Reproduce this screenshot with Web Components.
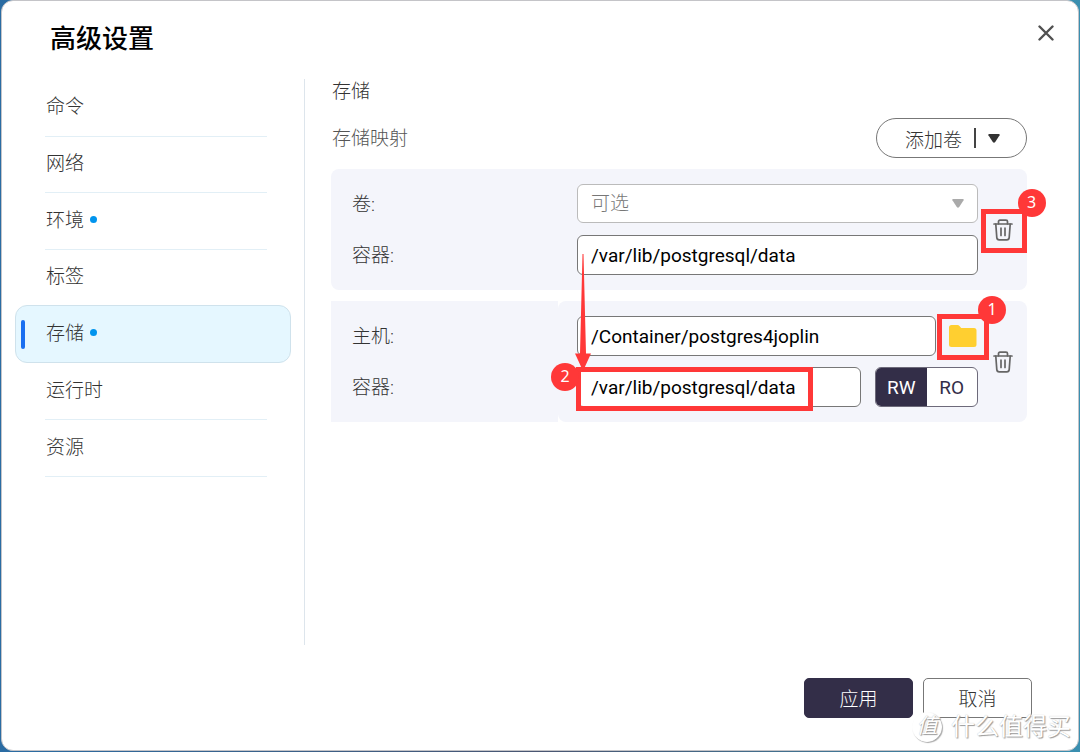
<!DOCTYPE html>
<html lang="zh-CN">
<head>
<meta charset="UTF-8">
<meta name="viewport" content="width=device-width, initial-scale=1.0">
<title>高级设置</title>
<style>
  body {
    margin: 0;
    min-height: 100vh;
    display: flex;
    background: linear-gradient(90deg, #2a6ca3 0%, #4a5672 50%, #3a8fb0 100%);
    font-family: Roboto, "Noto Sans CJK SC", sans-serif;
    font-size: 19px;
    font-weight: 300;
    color: #333;
  }
</style>
</head>
<body>
<settings-dialog>
  <settings-nav slot="nav">
    <nav-item>命令</nav-item>
    <nav-item>网络</nav-item>
    <nav-item changed>环境</nav-item>
    <nav-item>标签</nav-item>
    <nav-item changed active>存储</nav-item>
    <nav-item>运行时</nav-item>
    <nav-item>资源</nav-item>
  </settings-nav>
  <storage-settings>
    <volume-card></volume-card>
    <host-card></host-card>
  </storage-settings>
  <site-watermark slot="watermark"></site-watermark>
</settings-dialog>

<script>
const trashIcon = `
  <svg width="20" height="22" viewBox="0 0 20 22" fill="none" stroke="#666" stroke-width="1.7" stroke-linecap="round" stroke-linejoin="round">
    <path d="M1 5h18"/>
    <path d="M5.5 4.8V2.6Q5.5 1.2 7 1.2h6q1.500 0 1.500 1.400v2.200"/>
    <path d="M2.800 5.200l1 13.400q.2 2.200 2.400 2.200h7.600q2.200 0 2.400-2.200l1-13.400"/>
    <path d="M8 9.200v7.200M12 9.200v7.200"/>
  </svg>`;

// shared by both storage cards
const cardStyles = `
  :host { display: flex; position: relative; }
  * { box-sizing: border-box; }
  .labels, .controls {
    display: grid;
    grid-auto-rows: 40px;
    gap: 11px;
    padding: 15px 0;
    background: #f4f5fb;
  }
  .labels { flex: 0 0 227px; padding: 16px 0 14px 21px; }
  .labels label { line-height: 40px; }
  .controls { flex: 1; min-width: 0; padding-left: 19px; }
  .side {
    flex: 0 0 49px;
    display: flex;
    align-items: center;
    justify-content: center;
    background: #f4f5fb;
    border-radius: 0 8px 8px 0;
  }
  input, select {
    width: 100%;
    min-width: 0;
    height: 40px;
    padding: 0 13px;
    border: 1px solid #777;
    border-radius: 6px;
    background: #fff;
    font-family: inherit;
    font-size: 19px;
    font-weight: 400;
    color: #000;
  }
  .icon {
    display: flex;
    padding: 0;
    border: 0;
    background: none;
    cursor: pointer;
  }
`;

class SettingsDialog extends HTMLElement {
  connectedCallback() {
    this.attachShadow({ mode: 'open' });
    this.shadowRoot.innerHTML = `
      <style>
        :host {
          flex: 1;
          display: flex;
          flex-direction: column;
          position: relative;
          margin: 0 1px 1px;
          border: 1px solid #c4c4c8;
          border-radius: 12px;
          background: #fff;
        }
        header {
          display: flex;
          justify-content: space-between;
          align-items: flex-start;
          box-sizing: border-box;
          height: 78px;
          padding: 18px 24px 0 48px;
        }
        h1 {
          margin: 0;
          font-size: 26px;
          line-height: 40px;
          font-weight: 500;
          color: #000;
        }
        .close {
          display: flex;
          padding: 6px 0;
          border: 0;
          background: none;
          cursor: pointer;
        }
        .body { flex: 1; display: flex; }
        .nav {
          flex: 0 0 303px;
          box-sizing: border-box;
          padding-left: 13px;
          padding-right: 13px;
          border-right: 1px solid #dde5ec;
        }
        main { flex: 1; min-width: 0; padding: 0 51px 0 26px; }
        footer {
          display: flex;
          justify-content: flex-end;
          gap: 10px;
          padding: 33px 46px 32px;
        }
        footer button {
          width: 109px;
          height: 40px;
          padding: 0 0 2px;
          border: 1px solid #777;
          border-radius: 5px;
          background: #fff;
          font: inherit;
          color: #333;
          cursor: pointer;
        }
        footer .primary { background: #332e48; border-color: #332e48; color: #fff; }
      </style>
      <header>
        <h1>高级设置</h1>
        <button class="close" aria-label="关闭">
          <svg width="16" height="16" viewBox="0 0 16 16" stroke="#505050" stroke-width="2.400" stroke-linecap="round">
            <path d="M1.500 1.500l13 13M14.500 1.500l-13 13"/>
          </svg>
        </button>
      </header>
      <div class="body">
        <div class="nav"><slot name="nav"></slot></div>
        <main><slot></slot></main>
      </div>
      <footer>
        <button class="primary">应用</button>
        <button>取消</button>
      </footer>
      <slot name="watermark"></slot>
    `;
  }
}

class SettingsNav extends HTMLElement {
  connectedCallback() {
    this.attachShadow({ mode: 'open' });
    this.shadowRoot.innerHTML = `
      <style>
        :host { display: block; padding-top: 1px; }
        nav { display: grid; grid-auto-rows: 1fr; min-height: 397px; }
      </style>
      <nav><slot></slot></nav>
    `;
  }
}

class NavItem extends HTMLElement {
  connectedCallback() {
    this.attachShadow({ mode: 'open' });
    this.shadowRoot.innerHTML = `
      <style>
        :host {
          display: flex;
          position: relative;
          margin: 0 24px 0 30px;
          border-bottom: 1px solid #e2eff6;
        }
        a {
          flex: 1;
          display: flex;
          align-items: center;
          gap: 6px;
          padding: 0 0 6px 1px;
          color: inherit;
          text-decoration: none;
        }
        i { display: none; width: 7px; height: 7px; margin-top: 2px; border-radius: 50%; background: #0094ee; }
        :host([changed]) i { display: block; }
        :host([active]) {
          margin: -2px 0 1px;
          border: 1px solid #cfe2ec;
          border-radius: 12px;
          background: #e5f7ff;
        }
        :host([active]) a { padding: 0 0 4px 30px; }
        :host([active])::before {
          content: "";
          position: absolute;
          left: 5px;
          top: 14px;
          bottom: 13px;
          width: 4px;
          border-radius: 2px;
          background: #1a6ff0;
        }
      </style>
      <a href="#"><slot></slot><i></i></a>
    `;
  }
}

class StorageSettings extends HTMLElement {
  connectedCallback() {
    this.attachShadow({ mode: 'open' });
    this.shadowRoot.innerHTML = `
      <style>
        :host { display: block; }
        h2 { margin: 0 0 14px; padding-left: 1px; font-size: 19px; line-height: 25px; font-weight: 300; }
        .bar {
          display: flex;
          justify-content: space-between;
          align-items: center;
          margin-bottom: 11px;
          color: #555;
        }
        .bar span { padding: 0 0 4px 1px; }
        .add {
          display: flex;
          align-items: center;
          gap: 12px;
          height: 40px;
          padding: 0 26px 0 28px;
          border: 1px solid #777;
          border-radius: 20px;
          background: #fff;
          font: inherit;
          color: #333;
          cursor: pointer;
        }
        .add i { width: 2px; height: 20px; background: #444; }
        .cards { display: grid; gap: 11px; }
      </style>
      <h2>存储</h2>
      <div class="bar">
        <span>存储映射</span>
        <button class="add">添加卷<i></i>
          <svg width="12" height="9" viewBox="0 0 12 9" fill="#333"><path d="M1.200 0h9.600q1.200.2.800 1.300L7.200 8q-1.200 1.400-2.400 0L.4 1.300Q0 .2 1.200 0z"/></svg>
        </button>
      </div>
      <div class="cards"><slot></slot></div>
    `;
  }
}

class VolumeCard extends HTMLElement {
  connectedCallback() {
    this.attachShadow({ mode: 'open' });
    this.shadowRoot.innerHTML = `
      <style>
        ${cardStyles}
        .labels { border-radius: 8px 0 0 8px; }
        select {
          appearance: none;
          height: 39px;
          border-color: #bbb;
          background: #fff url('data:image/svg+xml,<svg xmlns="http://www.w3.org/2000/svg" width="12" height="9" fill="%23aaa"><path d="M1 0h10q1 .4.600 1.300L7.200 8q-1.200 1.400-2.400 0L.4 1.300Q0 .4 1 0z"/></svg>') no-repeat right 13px center;
          font-weight: 300;
          color: #777;
        }
      </style>
      <div class="labels">
        <label for="volume">卷:</label>
        <label for="target">容器:</label>
      </div>
      <div class="controls">
        <select id="volume"><option>可选</option></select>
        <input id="target" type="text" value="/var/lib/postgresql/data">
      </div>
      <div class="side">
        <call-out number="3" style="--inset: -10px -14px -12px -12px; --badge-x: 25px; --badge-y: -30px">
          <button class="icon" aria-label="删除">${trashIcon}</button>
        </call-out>
      </div>
    `;
  }
}

class HostCard extends HTMLElement {
  connectedCallback() {
    this.attachShadow({ mode: 'open' });
    this.shadowRoot.innerHTML = `
      <style>
        ${cardStyles}
        .controls { border-radius: 8px 0 0 8px; }
        .row { display: flex; align-items: center; }
        .row input[type=text] { flex: 1; }
        .folder { margin: 0 1px 0 13px; }
        .mode {
          display: flex;
          width: 103px;
          height: 40px;
          margin-left: 14px;
          border: 1px solid #6d6a7a;
          border-radius: 6px;
          overflow: hidden;
          background: #fff;
        }
        .mode label {
          flex: 1;
          text-align: center;
          line-height: 39px;
          font-weight: 400;
          color: #332e48;
          cursor: pointer;
        }
        .mode label:has(:checked) { background: #332e48; color: #fff; }
        .mode input { position: absolute; opacity: 0; width: 1px; height: 1px; }
        .path { flex: 1; display: flex; position: relative; }
        .mark { position: absolute; left: -1px; top: 0; }
        .mark span { display: block; width: 237px; height: 40px; }
        .path call-out { pointer-events: none; }
        .arrow { position: absolute; left: 244px; top: -47px; pointer-events: none; }
      </style>
      <div class="labels">
        <label for="source">主机:</label>
        <label for="target">容器:</label>
      </div>
      <div class="controls">
        <div class="row">
          <input id="source" type="text" value="/Container/postgres4joplin">
          <call-out class="folder" number="1" style="--inset: -11px -12px -13px -12px; --badge-x: 29px; --badge-y: -29px">
            <button class="icon" aria-label="选择文件夹">
              <svg width="28" height="22" viewBox="0 0 28 22" fill="#ffcf30"><path d="M2.500 0h6q1.200 0 2 1l1.700 2H25q2.500 0 2.500 2.500v14q0 2.500-2.500 2.500H2.500Q0 22 0 19.500v-17Q0 0 2.500 0z"/></svg>
            </button>
          </call-out>
        </div>
        <div class="row">
          <div class="path">
            <input id="target" type="text" value="/var/lib/postgresql/data">
            <call-out class="mark" number="2" style="--inset: 0 0 -4px 0; --badge-x: -25px; --badge-y: -4px"><span></span></call-out>
          </div>
          <div class="mode" role="radiogroup" aria-label="访问模式">
            <label><input type="radio" name="mode" checked>RW</label>
            <label><input type="radio" name="mode">RO</label>
          </div>
        </div>
      </div>
      <div class="side">
        <button class="icon" aria-label="删除">${trashIcon}</button>
      </div>
      <svg class="arrow" width="16" height="117" viewBox="0 0 16 117" fill="#ff3838"><path d="M7.500 0h1L11 99.500h5L8 117 0 99.500h5z"/></svg>
    `;
  }
}

// Red frame with a numbered badge, drawn over whatever is slotted in
class CallOut extends HTMLElement {
  connectedCallback() {
    this.attachShadow({ mode: 'open' });
    this.shadowRoot.innerHTML = `
      <style>
        :host { display: block; position: relative; }
        .frame {
          position: absolute;
          inset: var(--inset);
          border: 5px solid #ff3838;
          pointer-events: none;
        }
        b {
          position: absolute;
          left: var(--badge-x);
          top: var(--badge-y);
          z-index: 2;
          width: 28px;
          height: 28px;
          border-radius: 50%;
          background: #ff3838;
          color: #fff;
          font: 400 16px/26px "Noto Sans", sans-serif;
          text-align: center;
        }
      </style>
      <slot></slot>
      <div class="frame"></div>
      <b>${this.getAttribute('number')}</b>
    `;
  }
}

class SiteWatermark extends HTMLElement {
  connectedCallback() {
    this.attachShadow({ mode: 'open' });
    this.shadowRoot.innerHTML = `
      <style>
        :host {
          position: absolute;
          right: 7px;
          bottom: 5px;
          display: flex;
          align-items: center;
          gap: 9px;
          color: #fff;
          font-size: 24px;
          line-height: 36px;
          font-weight: 400;
          text-shadow: 1px 1px 1px #999, 0 0 1px #bbb;
          pointer-events: none;
        }
        .logo {
          width: 28px;
          height: 28px;
          border: 1px solid #fff;
          border-radius: 50%;
          background: #fff;
          box-shadow: 1px 1px 1px #aaa;
          font-size: 21px;
          font-style: italic;
          line-height: 26px;
          text-align: center;
        }
      </style>
      <span class="logo">值</span>
      <span>什么值得买</span>
    `;
  }
}

customElements.define('call-out', CallOut);
customElements.define('site-watermark', SiteWatermark);
customElements.define('nav-item', NavItem);
customElements.define('settings-nav', SettingsNav);
customElements.define('volume-card', VolumeCard);
customElements.define('host-card', HostCard);
customElements.define('storage-settings', StorageSettings);
customElements.define('settings-dialog', SettingsDialog);
</script>
</body>
</html>
